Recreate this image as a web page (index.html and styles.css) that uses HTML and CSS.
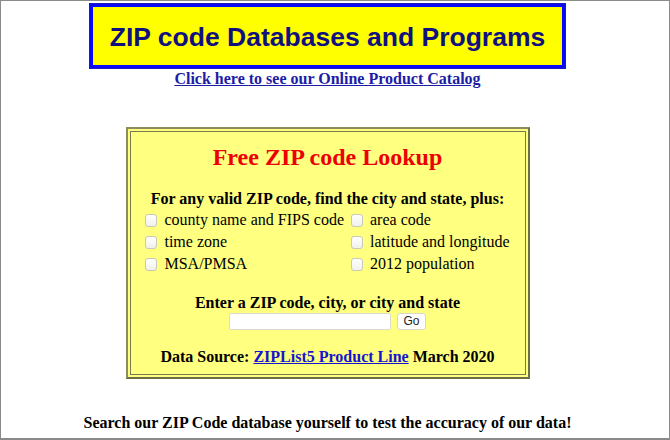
FILE: index.html
```html
<!DOCTYPE html>
<html>
<head>
<meta charset="utf-8">
<title>ZIP code Databases and Programs</title>
<link rel="stylesheet" href="styles.css">
</head>
<body>
<div class="frame">
  <div class="page">
    <div class="banner"><span class="banner-text">ZIP code Databases and Programs</span></div>
    <div class="catalog"><a class="catalog-link" href="#">Click here to see our Online Product Catalog</a></div>

    <div class="lookup">
      <div class="lookup-cell">
        <div class="lookup-title">Free ZIP code Lookup</div>
        <div class="lookup-intro">For any valid ZIP code, find the city and state, plus:</div>
        <div class="options">
          <label class="opt"><input type="checkbox" class="cb"><span>county name and FIPS code</span></label>
          <label class="opt"><input type="checkbox" class="cb"><span>area code</span></label>
          <label class="opt"><input type="checkbox" class="cb"><span>time zone</span></label>
          <label class="opt"><input type="checkbox" class="cb"><span>latitude and longitude</span></label>
          <label class="opt"><input type="checkbox" class="cb"><span>MSA/PMSA</span></label>
          <label class="opt"><input type="checkbox" class="cb"><span>2012 population</span></label>
        </div>
        <div class="enter-label">Enter a ZIP code, city, or city and state</div>
        <div class="search-row">
          <input type="text" class="search-input">
          <button class="go-btn" type="button">Go</button>
        </div>
        <div class="source">Data Source: <a class="source-link" href="#">ZIPList5 Product Line</a> March 2020</div>
      </div>
    </div>

    <div class="tagline">Search our ZIP Code database yourself to test the accuracy of our data!</div>
  </div>
</div>
</body>
</html>
```

FILE: styles.css
```css
html, body {
  margin: 0;
  padding: 0;
  background: #ffffff;
}

.frame {
  width: 670px;
  height: 440px;
  box-sizing: border-box;
  border: 1px solid #8a8a8a;
  border-bottom-width: 2px;
  overflow: hidden;
  font-family: "Liberation Serif", "Times New Roman", serif;
  font-size: 16px;
  color: #000;
}

.page {
  margin-right: 15px;
  display: flex;
  flex-direction: column;
  align-items: center;
}

.banner {
  margin-top: 2px;
  width: 477px;
  height: 66px;
  box-sizing: border-box;
  border: 4px solid #0a0af5;
  outline: 1px solid #1a1ac0;
  outline-offset: -1px;
  background: #ffff00;
  display: flex;
  align-items: center;
  justify-content: center;
}

.banner-text {
  font-family: "Liberation Sans", Arial, sans-serif;
  font-weight: bold;
  font-size: 26.5px;
  color: #10107e;
  line-height: 30px;
  padding-top: 2px;
}

.catalog {
  height: 18px;
  line-height: 18px;
  margin-top: 1px;
  font-weight: bold;
}

.catalog-link {
  color: #1c1ca6;
  text-decoration: underline;
}

.lookup {
  margin-top: 39px;
  width: 404px;
  height: 252px;
  box-sizing: border-box;
  border: 2px solid;
  border-color: #8c8c5c #6e6e44 #6e6e44 #8c8c5c;
  background: #ffff80;
  padding: 2px;
}

.lookup-cell {
  height: 100%;
  box-sizing: border-box;
  border: 1px solid #7a7a50;
  background: #ffff80;
  display: flex;
  flex-direction: column;
  align-items: center;
  padding-top: 11px;
}

.lookup-title {
  font-size: 24px;
  font-weight: bold;
  color: #ee0000;
  line-height: 28px;
  height: 28px;
}

.lookup-intro {
  margin-top: 19px;
  font-weight: bold;
  line-height: 18px;
  height: 18px;
}

.options {
  margin-top: 1px;
  display: grid;
  grid-template-columns: auto auto;
  column-gap: 7px;
}

.opt {
  display: flex;
  align-items: center;
  height: 22px;
  line-height: 18px;
}

.cb {
  -webkit-appearance: none;
  appearance: none;
  width: 12px;
  height: 13px;
  box-sizing: border-box;
  margin: 0 7px 0 0;
  border: 1px solid #c8c8bc;
  border-radius: 3px;
  background: linear-gradient(#ffffff, #f1f1ea);
}

.enter-label {
  margin-top: 19px;
  font-weight: bold;
  line-height: 18px;
  height: 18px;
}

.search-row {
  margin-top: 0;
  display: flex;
  align-items: center;
  gap: 6px;
  height: 18px;
}

.search-input {
  width: 162px;
  height: 17px;
  box-sizing: border-box;
  margin: 0;
  padding: 0 3px;
  border: 1px solid #dcdcd0;
  border-radius: 2px;
  background: #ffffff;
  font-size: 13px;
}

.go-btn {
  width: 29px;
  height: 17px;
  box-sizing: border-box;
  margin: 0;
  padding: 0;
  border: 1px solid #d8d8cc;
  border-radius: 3px;
  background: #ffffff;
  font-family: "Liberation Sans", Arial, sans-serif;
  font-size: 12px;
  color: #222;
  line-height: 15px;
}

.source {
  margin-top: 18px;
  font-weight: bold;
  line-height: 18px;
  height: 18px;
}

.source-link {
  color: #1515d0;
  text-decoration: underline;
}

.tagline {
  margin-top: 35px;
  font-weight: bold;
  line-height: 18px;
  height: 18px;
}
```
